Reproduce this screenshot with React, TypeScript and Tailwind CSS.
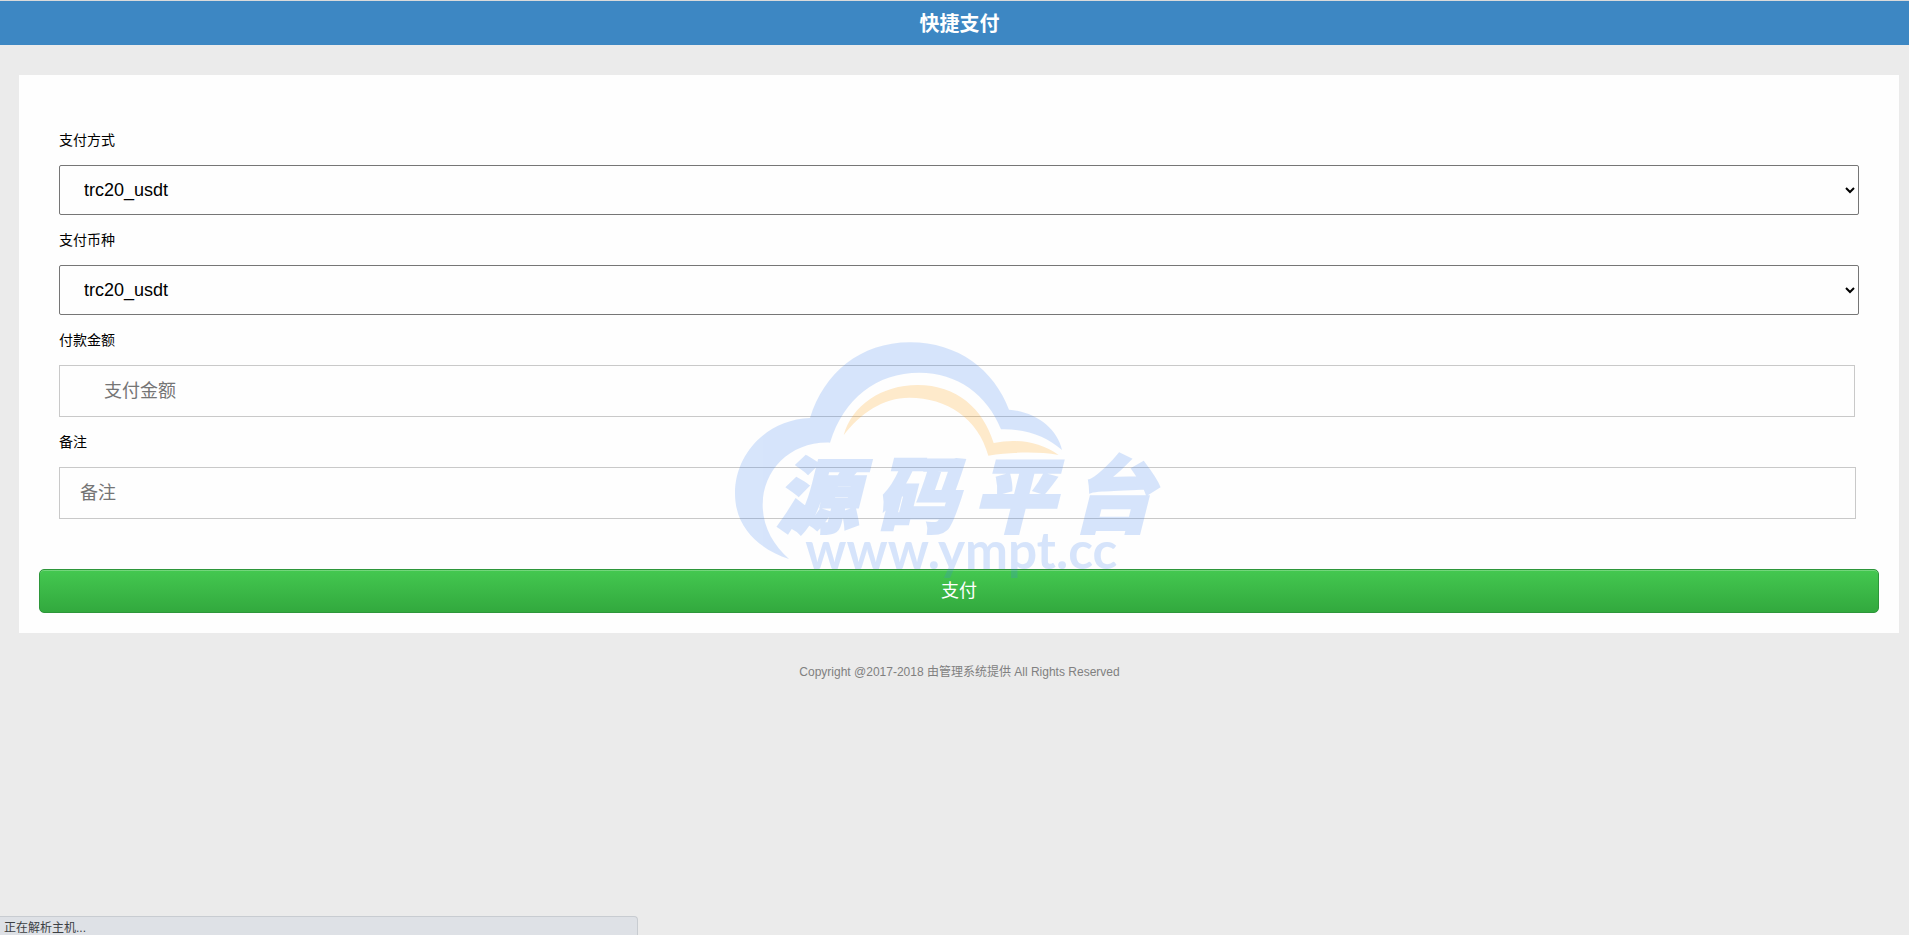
import { useState } from "react"
import type { FormEvent } from "react"

const channels = ["trc20_usdt"]

function Watermark() {
  return (
    <svg
      viewBox="45 30 1344 732"
      aria-hidden="true"
      className="pointer-events-none absolute inset-x-0 top-[265px] mx-auto h-[244px] w-[448px] overflow-visible"
    >
      <g fill="#3c82f0" stroke="#3c82f0" strokeWidth="0" opacity="0.2">
        <path d="M207 687 C120 658 45 596 45 490 C45 368 145 268 270 264 C312 130 420 37 570 37 C715 37 822 120 867 239 C948 246 1012 296 1026 360 C980 320 920 296 843 298 C802 194 712 128 598 128 C470 128 370 206 330 338 C212 334 128 420 128 525 C128 590 160 645 207 687 Z" />
        <text x="168 466 758 1054" y="589" fontSize="246" fontWeight="900" fontStyle="italic" strokeWidth="8" className="font-['Noto_Sans_CJK_SC',sans-serif]">源码平台</text>
        <text x="256" y="717" fontSize="154" fontWeight="700" className="font-[Lato,sans-serif]">www.ympt.cc</text>
      </g>
      <path
        fill="#ff9b00"
        fillOpacity="0.2"
        d="M371 316 C396 226 484 165 593 165 C710 165 790 236 821 339 C890 325 960 335 1016 375 C950 364 880 366 805 377 C775 265 680 203 568 203 C490 203 420 250 371 316 Z"
      />
    </svg>
  )
}

export default function App() {
  const [method, setMethod] = useState(channels[0])
  const [coin, setCoin] = useState(channels[0])
  const [amount, setAmount] = useState("")
  const [remark, setRemark] = useState("")

  const submit = (e: FormEvent) => {
    e.preventDefault()
  }

  return (
    <div className="min-h-screen bg-[#ebebeb] font-['Liberation_Sans','Noto_Sans_CJK_SC',sans-serif] text-black">
      <header className="border-t border-[#dadada] bg-[#3d87c3] pt-0.5">
        <h1 className="pl-[10px] text-center text-xl leading-[42px] font-bold text-white">快捷支付</h1>
      </header>

      <main className="relative mt-[30px] mr-[10px] ml-[19px] bg-[#fefefe] px-5 pt-10 pb-5">
        <form onSubmit={submit}>
          <div className="flex flex-col px-5">
            <label htmlFor="method" className="text-sm leading-[50px]">支付方式</label>
            <select id="method" value={method} onChange={(e) => setMethod(e.target.value)}
              className="h-[50px] rounded-[2px] border border-[#767676] px-5 text-lg">
              {channels.map((c) => <option key={c}>{c}</option>)}
            </select>

            <label htmlFor="coin" className="text-sm leading-[50px]">支付币种</label>
            <select id="coin" value={coin} onChange={(e) => setCoin(e.target.value)}
              className="h-[50px] rounded-[2px] border border-[#767676] px-5 text-lg">
              {channels.map((c) => <option key={c}>{c}</option>)}
            </select>

            <label htmlFor="amount" className="text-sm leading-[50px]">付款金额</label>
            <input id="amount" value={amount} onChange={(e) => setAmount(e.target.value)} placeholder="支付金额"
              className="mr-1 h-[52px] border border-[#c9c9c9] pr-5 pl-11 text-lg placeholder:text-[#757575]" />

            <label htmlFor="remark" className="text-sm leading-[50px]">备注</label>
            <input id="remark" value={remark} onChange={(e) => setRemark(e.target.value)} placeholder="备注"
              className="mr-[3px] h-[52px] border border-[#c9c9c9] px-5 text-lg placeholder:text-[#757575]" />
          </div>

          <button type="submit"
            className="mt-[50px] block h-[44px] w-full rounded-[5px] border border-[#2d963a] bg-linear-to-b from-[#44c850] to-[#32a93e] text-lg text-white shadow-[inset_0_1px_0_rgba(255,255,255,0.25)]">
            支付
          </button>
        </form>
        <Watermark />
      </main>

      <footer className="mt-[31px] pl-[10px] text-center text-xs leading-4 text-[#808080]">
        Copyright @2017-2018 由管理系统提供 All Rights Reserved
      </footer>

      <div className="fixed bottom-0 left-0 h-[19px] w-[638px] rounded-tr border-t border-r border-[#c8ccd1] bg-[#dee1e6] pl-1 text-xs leading-[22px] text-[#3c4043]">
        正在解析主机...
      </div>
    </div>
  )
}
